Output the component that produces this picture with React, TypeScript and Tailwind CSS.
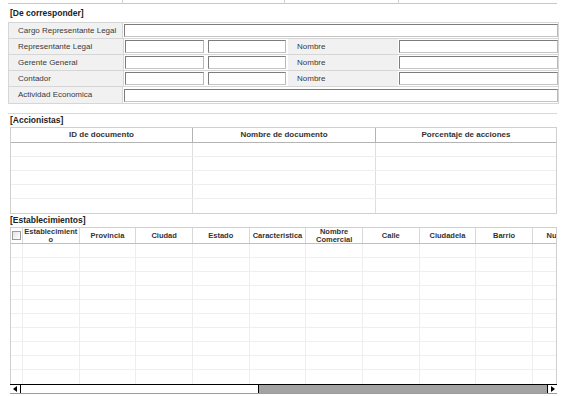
import React from "react";

const Input = ({ w }: { w: string }) => (
  <div
    className={`${w} h-[13px] bg-white border border-t-[#7c7c7c] border-l-[#7c7c7c] border-r-[#b8b8b8] border-b-[#c4c4c4]`}
  />
);

const Label = ({ text, w }: { text: string; w: string }) => (
  <div className={`${w} h-full bg-[#f1f1f1] flex items-center pl-[9px] text-[8px] text-[#3a3a3a]`}>
    {text}
  </div>
);

const FullRow = ({ label, last }: { label: string; last?: boolean }) => (
  <div className={`flex h-[16px] ${last ? "" : "border-b border-[#d6d6d6]"}`}>
    <Label text={label} w="w-[114px]" />
    <div className="w-px h-full bg-[#d6d6d6]" />
    <div className="flex items-center pl-[1px]">
      <Input w="w-[434px]" />
    </div>
  </div>
);

const SplitRow = ({ label }: { label: string }) => (
  <div className="flex h-[16px] border-b border-[#d6d6d6]">
    <Label text={label} w="w-[114px]" />
    <div className="w-px h-full bg-[#d6d6d6]" />
    <div className="flex items-center pl-[1px]">
      <Input w="w-[79px]" />
    </div>
    <div className="flex items-center pl-[4px]">
      <Input w="w-[78px]" />
    </div>
    <div className="w-[2px]" />
    <Label text="Nombre" w="w-[110px]" />
    <div className="flex items-center pl-px">
      <Input w="w-[159px]" />
    </div>
  </div>
);

const estCols = [
  ["Establecimient", "o"],
  ["Provincia"],
  ["Ciudad"],
  ["Estado"],
  ["Caracteristica"],
  ["Nombre", "Comercial"],
  ["Calle"],
  ["Ciudadela"],
  ["Barrio"],
  ["Numero"],
];

export default function App() {
  return (
    <div className="relative w-[567px] h-[396px] overflow-hidden bg-white font-['Liberation_Sans',Arial,sans-serif]">
      {/* top strip remnant */}
      <div className="h-[5px] relative">
        <div className="absolute left-[8px] w-[549px] top-[3px] h-px bg-[#c8c8c8]" />
        <div className="absolute left-[122px] top-0 w-px h-[4px] bg-[#d0d0d0]" />
        <div className="absolute left-[284px] top-0 w-px h-[4px] bg-[#d0d0d0]" />
        <div className="absolute left-[398px] top-0 w-px h-[4px] bg-[#d0d0d0]" />
      </div>

      {/* De corresponder */}
      <div className="h-[17px] flex items-center pl-[10px] text-[8.5px] font-bold text-[#222]">
        [De corresponder]
      </div>
      <div className="ml-[8px] w-[551px] border border-[#d6d6d6]">
        <FullRow label="Cargo Representante Legal" />
        <SplitRow label="Representante Legal" />
        <SplitRow label="Gerente General" />
        <SplitRow label="Contador" />
        <FullRow label="Actividad Economica" last />
      </div>

      {/* separator */}
      <div className="mt-[9px] ml-[8px] w-[549px] h-px bg-[#d8d8d8]" />

      {/* Accionistas */}
      <div className="h-[13px] flex items-center pl-[10px] text-[8.5px] font-bold text-[#222]">
        [Accionistas]
      </div>
      <div className="ml-[10px] w-[547px] border border-[#d0d0d0]">
        <div className="grid grid-cols-[182px_183px_1fr] h-[15px] border-b border-[#b4b4b4]">
          <div className="flex items-center justify-center text-[8px] font-bold text-[#333] border-r border-[#b4b4b4]">
            ID de documento
          </div>
          <div className="flex items-center justify-center text-[8px] font-bold text-[#333] border-r border-[#b4b4b4]">
            Nombre de documento
          </div>
          <div className="flex items-center justify-center text-[8px] font-bold text-[#333]">
            Porcentaje de acciones
          </div>
        </div>
        {[0, 1, 2, 3, 4].map((r) => (
          <div
            key={r}
            className={`grid grid-cols-[182px_183px_1fr] h-[14px] ${r < 4 ? "border-b border-[#eeeeee]" : ""}`}
          >
            <div className="border-r border-[#dedede]" />
            <div className="border-r border-[#dedede]" />
            <div />
          </div>
        ))}
      </div>

      {/* Establecimientos */}
      <div className="h-[13px] flex items-center pl-[10px] text-[8.5px] font-bold text-[#222]">
        [Establecimientos]
      </div>
      <div className="ml-[10px] w-[547px] border-t border-l border-r border-[#d0d0d0] overflow-hidden">
        <div className="grid grid-cols-[12px_repeat(10,56.67px)] h-[16px] border-b border-[#c0c0c0]">
          <div className="flex items-center justify-center border-r border-[#d8d8d8]">
            <div className="w-[9px] h-[9px] border border-[#9a9a9a] bg-gradient-to-br from-[#e4e4e4] to-[#ffffff]" />
          </div>
          {estCols.map((c, i) => (
            <div
              key={i}
              className="flex flex-col items-center justify-center text-[7.5px] leading-[8px] font-bold text-[#333] border-r border-[#d8d8d8] whitespace-nowrap overflow-hidden"
            >
              {c.map((t, j) => (
                <span key={j}>{t}</span>
              ))}
            </div>
          ))}
        </div>
        {Array.from({ length: 10 }).map((_, r) => (
          <div
            key={r}
            className={`grid grid-cols-[12px_repeat(10,56.67px)] h-[14px] ${r < 9 ? "border-b border-[#efefef]" : ""}`}
          >
            {Array.from({ length: 11 }).map((__, c) => (
              <div key={c} className="border-r border-[#eeeeee]" />
            ))}
          </div>
        ))}
      </div>
      {/* scrollbar */}
      <div className="ml-[10px] w-[547px] h-[10px] flex border-t border-black border-b border-b-[#9c9c9c]">
        <div className="w-[11px] h-full bg-white border-r border-black flex items-center justify-center">
          <div className="w-0 h-0 border-t-[3px] border-b-[3px] border-r-[4px] border-t-transparent border-b-transparent border-r-black" />
        </div>
        <div className="w-[238px] h-full bg-white border-r border-black" />
        <div className="flex-1 h-full bg-[#a3a3a3]" />
        <div className="w-[10px] h-full bg-white border-l border-black flex items-center justify-center">
          <div className="w-0 h-0 border-t-[3px] border-b-[3px] border-l-[4px] border-t-transparent border-b-transparent border-l-black" />
        </div>
      </div>
    </div>
  );
}
